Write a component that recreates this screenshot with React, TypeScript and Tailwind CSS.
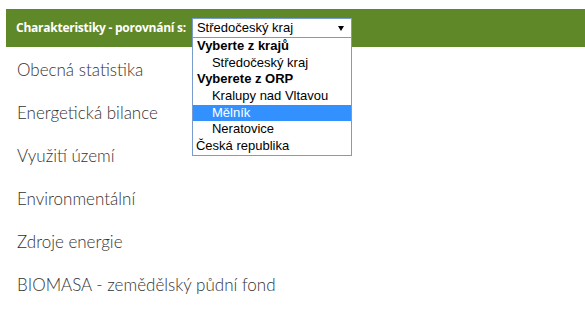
const sections = [
  'Obecná statistika',
  'Energetická bilance',
  'Využití území',
  'Environmentální',
  'Zdroje energie',
  'BIOMASA - zemědělský půdní fond',
]

type Row = { label: string; kind: 'group' | 'option' | 'top'; active?: boolean }

const rows: Row[] = [
  { label: 'Vyberte z krajů', kind: 'group' },
  { label: 'Středočeský kraj', kind: 'option' },
  { label: 'Vyberete z ORP', kind: 'group' },
  { label: 'Kralupy nad Vltavou', kind: 'option' },
  { label: 'Mělník', kind: 'option', active: true },
  { label: 'Neratovice', kind: 'option' },
  { label: 'Česká republika', kind: 'top' },
]

function CompareSelect() {
  return (
    <div className="relative">
      <div className="flex h-[20px] w-[160px] items-center justify-between border border-[#7a9bd0] bg-white pl-[4px] pr-[7px] font-['Liberation_Sans',Arial,sans-serif] text-[13px] text-black">
        <span>Středočeský kraj</span>
        <svg width="6" height="5" viewBox="0 0 6 5">
          <path d="M0 0h6L3 5z" fill="#000" />
        </svg>
      </div>

      {/* open option list */}
      <div className="absolute left-0 top-[19px] z-10 w-[160px] border border-[#7a9bd0] bg-white font-['Liberation_Sans',Arial,sans-serif] text-[13px] leading-[16.7px] text-black">
        {rows.map((row) => (
          <div
            key={row.label}
            className={
              'h-[16.7px] ' +
              (row.kind === 'group' ? 'pl-[4px] font-bold' : row.kind === 'option' ? 'pl-[19px]' : 'pl-[3px]') +
              (row.active ? ' bg-[#3391ff] text-white' : '')
            }
          >
            {row.label}
          </div>
        ))}
      </div>
    </div>
  )
}

export default function App() {
  return (
    <div className="min-h-[317px] bg-white pl-[6px] pt-[9px]">
      <div className="flex h-[38px] items-center gap-[6px] bg-[#5f8829] pl-[10px]">
        <span className="font-['Open_Sans',sans-serif] text-[12px] font-bold tracking-[-0.25px] text-white">
          Charakteristiky - porovnání s:
        </span>
        <CompareSelect />
      </div>

      <ul className="mt-[1px] pl-[11px]">
        {sections.map((s) => (
          <li
            key={s}
            className="flex h-[43px] items-center font-['Lato',sans-serif] text-[17px] font-light text-[#333]"
          >
            {s}
          </li>
        ))}
      </ul>
    </div>
  )
}
